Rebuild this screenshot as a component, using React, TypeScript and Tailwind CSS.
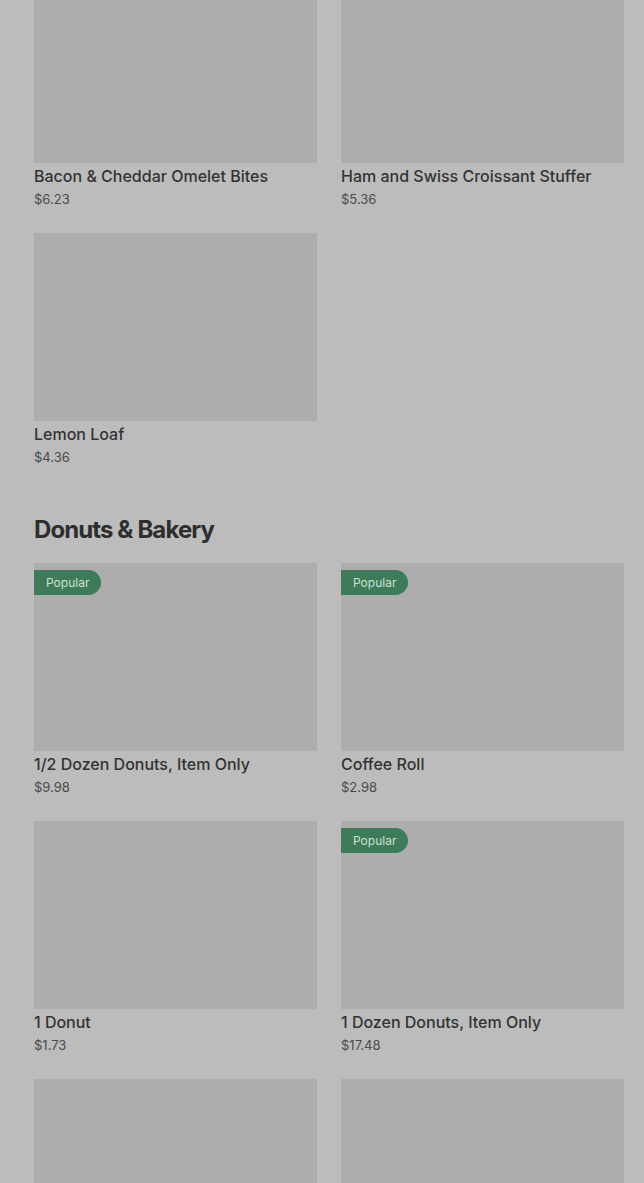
import React from 'react';

type Item = { name: string; price: string; popular?: boolean };

const breakfast: Item[] = [
  { name: 'Bacon & Cheddar Omelet Bites', price: '$6.23' },
  { name: 'Ham and Swiss Croissant Stuffer', price: '$5.36' },
  { name: 'Lemon Loaf', price: '$4.36' },
];

const bakery: Item[] = [
  { name: '1/2 Dozen Donuts, Item Only', price: '$9.98', popular: true },
  { name: 'Coffee Roll', price: '$2.98', popular: true },
  { name: '1 Donut', price: '$1.73' },
  { name: '1 Dozen Donuts, Item Only', price: '$17.48', popular: true },
  { name: '', price: '' },
  { name: '', price: '' },
];

function Card({ item }: { item: Item }) {
  return (
    <div className="flex flex-col">
      <div className="relative h-[188px] bg-[#adadad]">
        {item.popular && (
          <span className="absolute left-0 top-[7px] flex h-[25px] items-center rounded-r-full bg-[#3e7b59] pl-3 pr-3 text-[12px] text-[#cfe0d5]">
            Popular
          </span>
        )}
      </div>
      {item.name && (
        <>
          <div className="mt-[3px] h-[20px] text-[16px] leading-[20px] font-medium text-[#333333]">{item.name}</div>
          <div className="mt-[3px] h-[20px] text-[13px] leading-[20px] text-[#4a4a4a]">{item.price}</div>
        </>
      )}
    </div>
  );
}

export default function App() {
  return (
    <div
      className="h-[1183px] overflow-hidden bg-[#bcbcbc] pl-[34px] pr-[20px]"
      style={{ fontFamily: 'Inter, "Noto Sans", sans-serif' }}
    >
      <div className="-mt-[25px] grid grid-cols-2 gap-x-[24px] gap-y-[24px]">
        {breakfast.map((it, i) => (
          <Card key={i} item={it} />
        ))}
      </div>
      <h2 className="mt-[47px] mb-[17px] h-[32px] text-[24px] leading-[32px] font-bold tracking-[-0.9px] text-[#2e2e2e]">
        Donuts &amp; Bakery
      </h2>
      <div className="grid grid-cols-2 gap-x-[24px] gap-y-[24px]">
        {bakery.map((it, i) => (
          <Card key={i} item={it} />
        ))}
      </div>
    </div>
  );
}
